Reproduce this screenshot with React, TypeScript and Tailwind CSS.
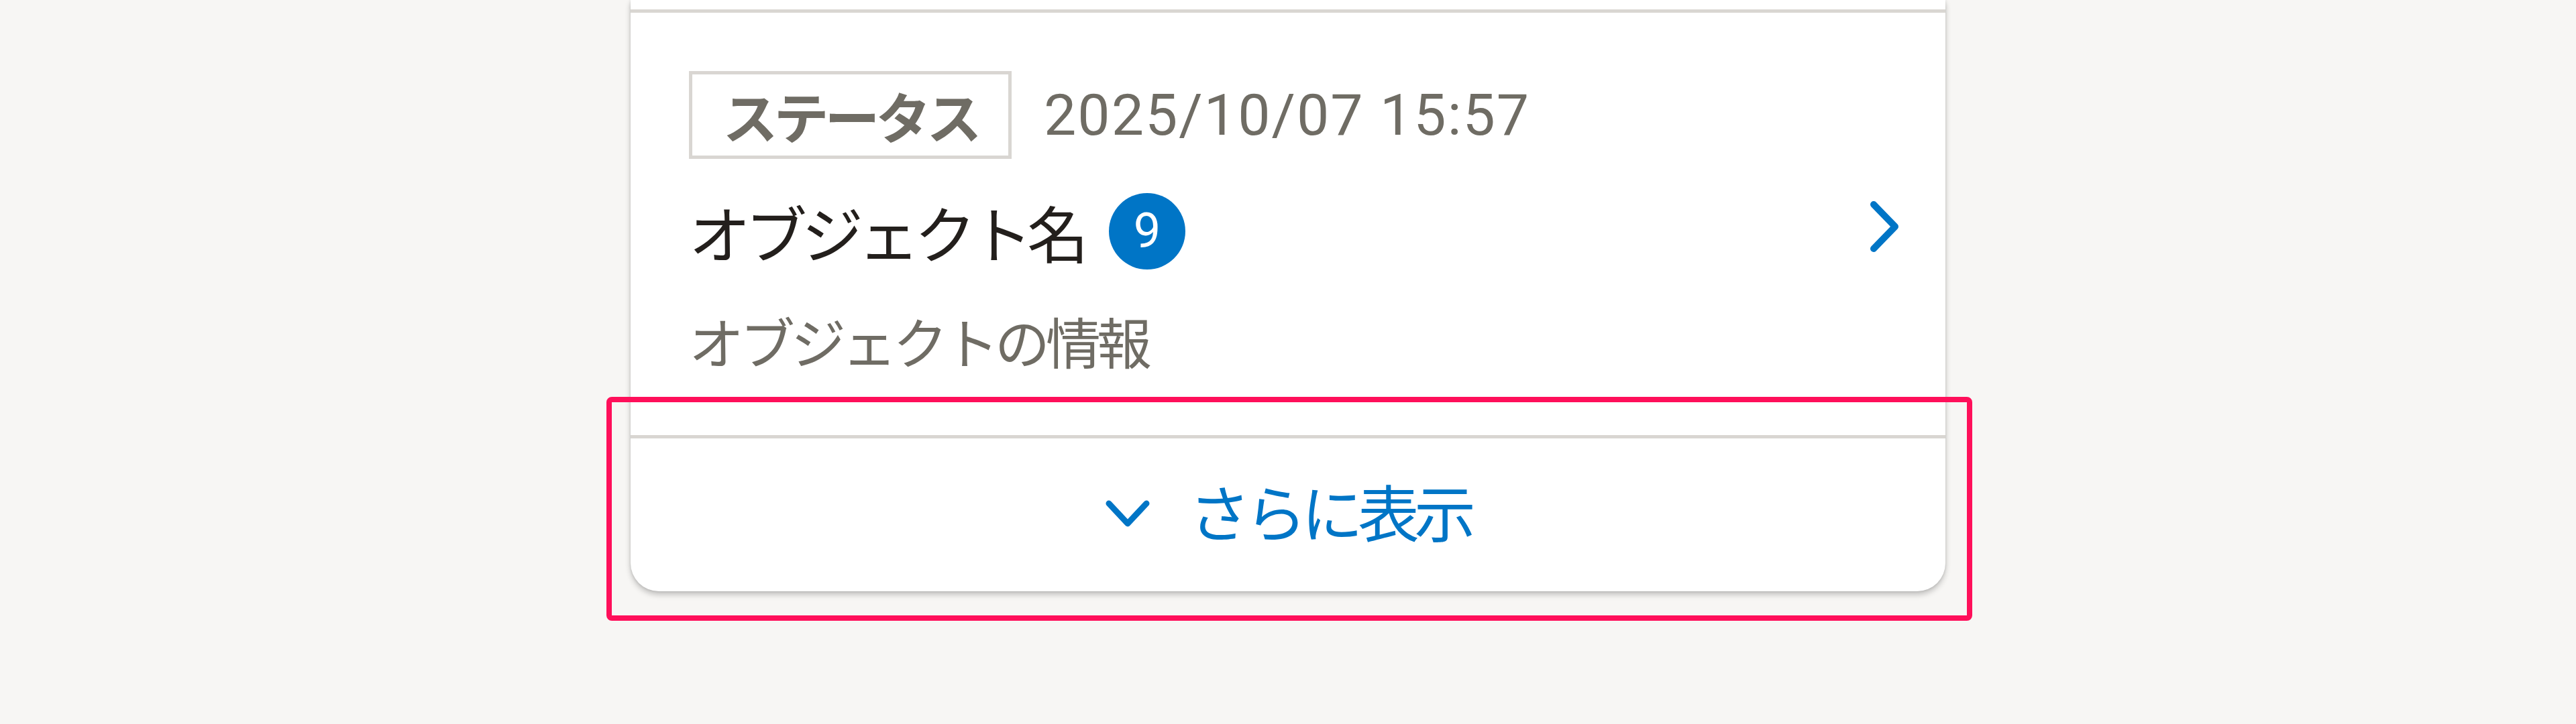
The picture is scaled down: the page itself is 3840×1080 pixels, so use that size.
import React from "react";

const font = "font-['Noto_Sans_CJK_JP','Noto_Sans',sans-serif]";

function ChevronRight() {
    return (
        <svg width="44" height="78" viewBox="0 0 44 78" fill="none">
            <polyline points="6,6 38,39 6,72" stroke="#0075c6" strokeWidth="10" strokeLinecap="round" strokeLinejoin="round" />
        </svg>
    );
}

function ChevronDown() {
    return (
        <svg width="66" height="40" viewBox="0 0 66 40" fill="none">
            <polyline points="5,5 33,35 61,5" stroke="#0075c6" strokeWidth="9" strokeLinecap="round" strokeLinejoin="round" />
        </svg>
    );
}

export default function App() {
    return (
        <div className={`min-h-[1080px] w-full bg-[#f7f6f4] ${font}`}>
            <div className="relative mx-auto w-[1960px]">
                <div className="rounded-b-[42px] bg-white shadow-[0_5px_8px_rgba(0,0,0,0.22),0_0_4px_rgba(0,0,0,0.12)]">
                    {/* previous item tail */}
                    <div className="h-[14px] border-b-[5px] border-[#d9d6d2] box-content" />

                    {/* item */}
                    <div className="px-[87px] pt-[87px] h-[630px] box-border">
                        <div className="flex items-center gap-[48px]">
                            <span className="flex h-[131px] w-[481px] items-center justify-center border-[5px] border-[#d9d6d2] text-[82px] font-bold leading-none tracking-[-6px] text-[#6f6c64]">
                                ステータス
                            </span>
                            <span className="font-['Roboto',sans-serif] text-[86px] leading-none tracking-[2px] text-[#6f6c64]">
                                2025/10/07 15:57
                            </span>
                        </div>

                        <div className="mt-[52px] flex h-[112px] items-center justify-between">
                            <div className="flex items-center">
                                <span className="text-[92px] leading-none tracking-[-8px] text-[#231f1c]">オブジェクト名</span>
                                <span className="ml-[38px] flex h-[114px] w-[114px] items-center justify-center rounded-full bg-[#0075c6] font-['Roboto',sans-serif] text-[72px] leading-none text-white">
                                    9
                                </span>
                            </div>
                            <div className="mr-[-18px] -mt-[14px]">
                                <ChevronRight />
                            </div>
                        </div>

                        <p className="mt-[66px] text-[82px] leading-none tracking-[-6px] text-[#6f6c64]">オブジェクトの情報</p>
                    </div>

                    {/* show more */}
                    <button className="flex h-[233px] w-full items-center justify-center gap-[58px] border-t-[5px] border-[#d9d6d2] pb-[4px]">
                        <ChevronDown />
                        <span className="mb-[10px] text-[92px] leading-none tracking-[-8px] text-[#0075c6]">さらに表示</span>
                    </button>
                </div>

                {/* highlight */}
                <div className="pointer-events-none absolute left-[-36px] top-[592px] h-[334px] w-[2036px] rounded-[8px] border-[8px] border-[#ff0f5a]" />
            </div>
        </div>
    );
}
